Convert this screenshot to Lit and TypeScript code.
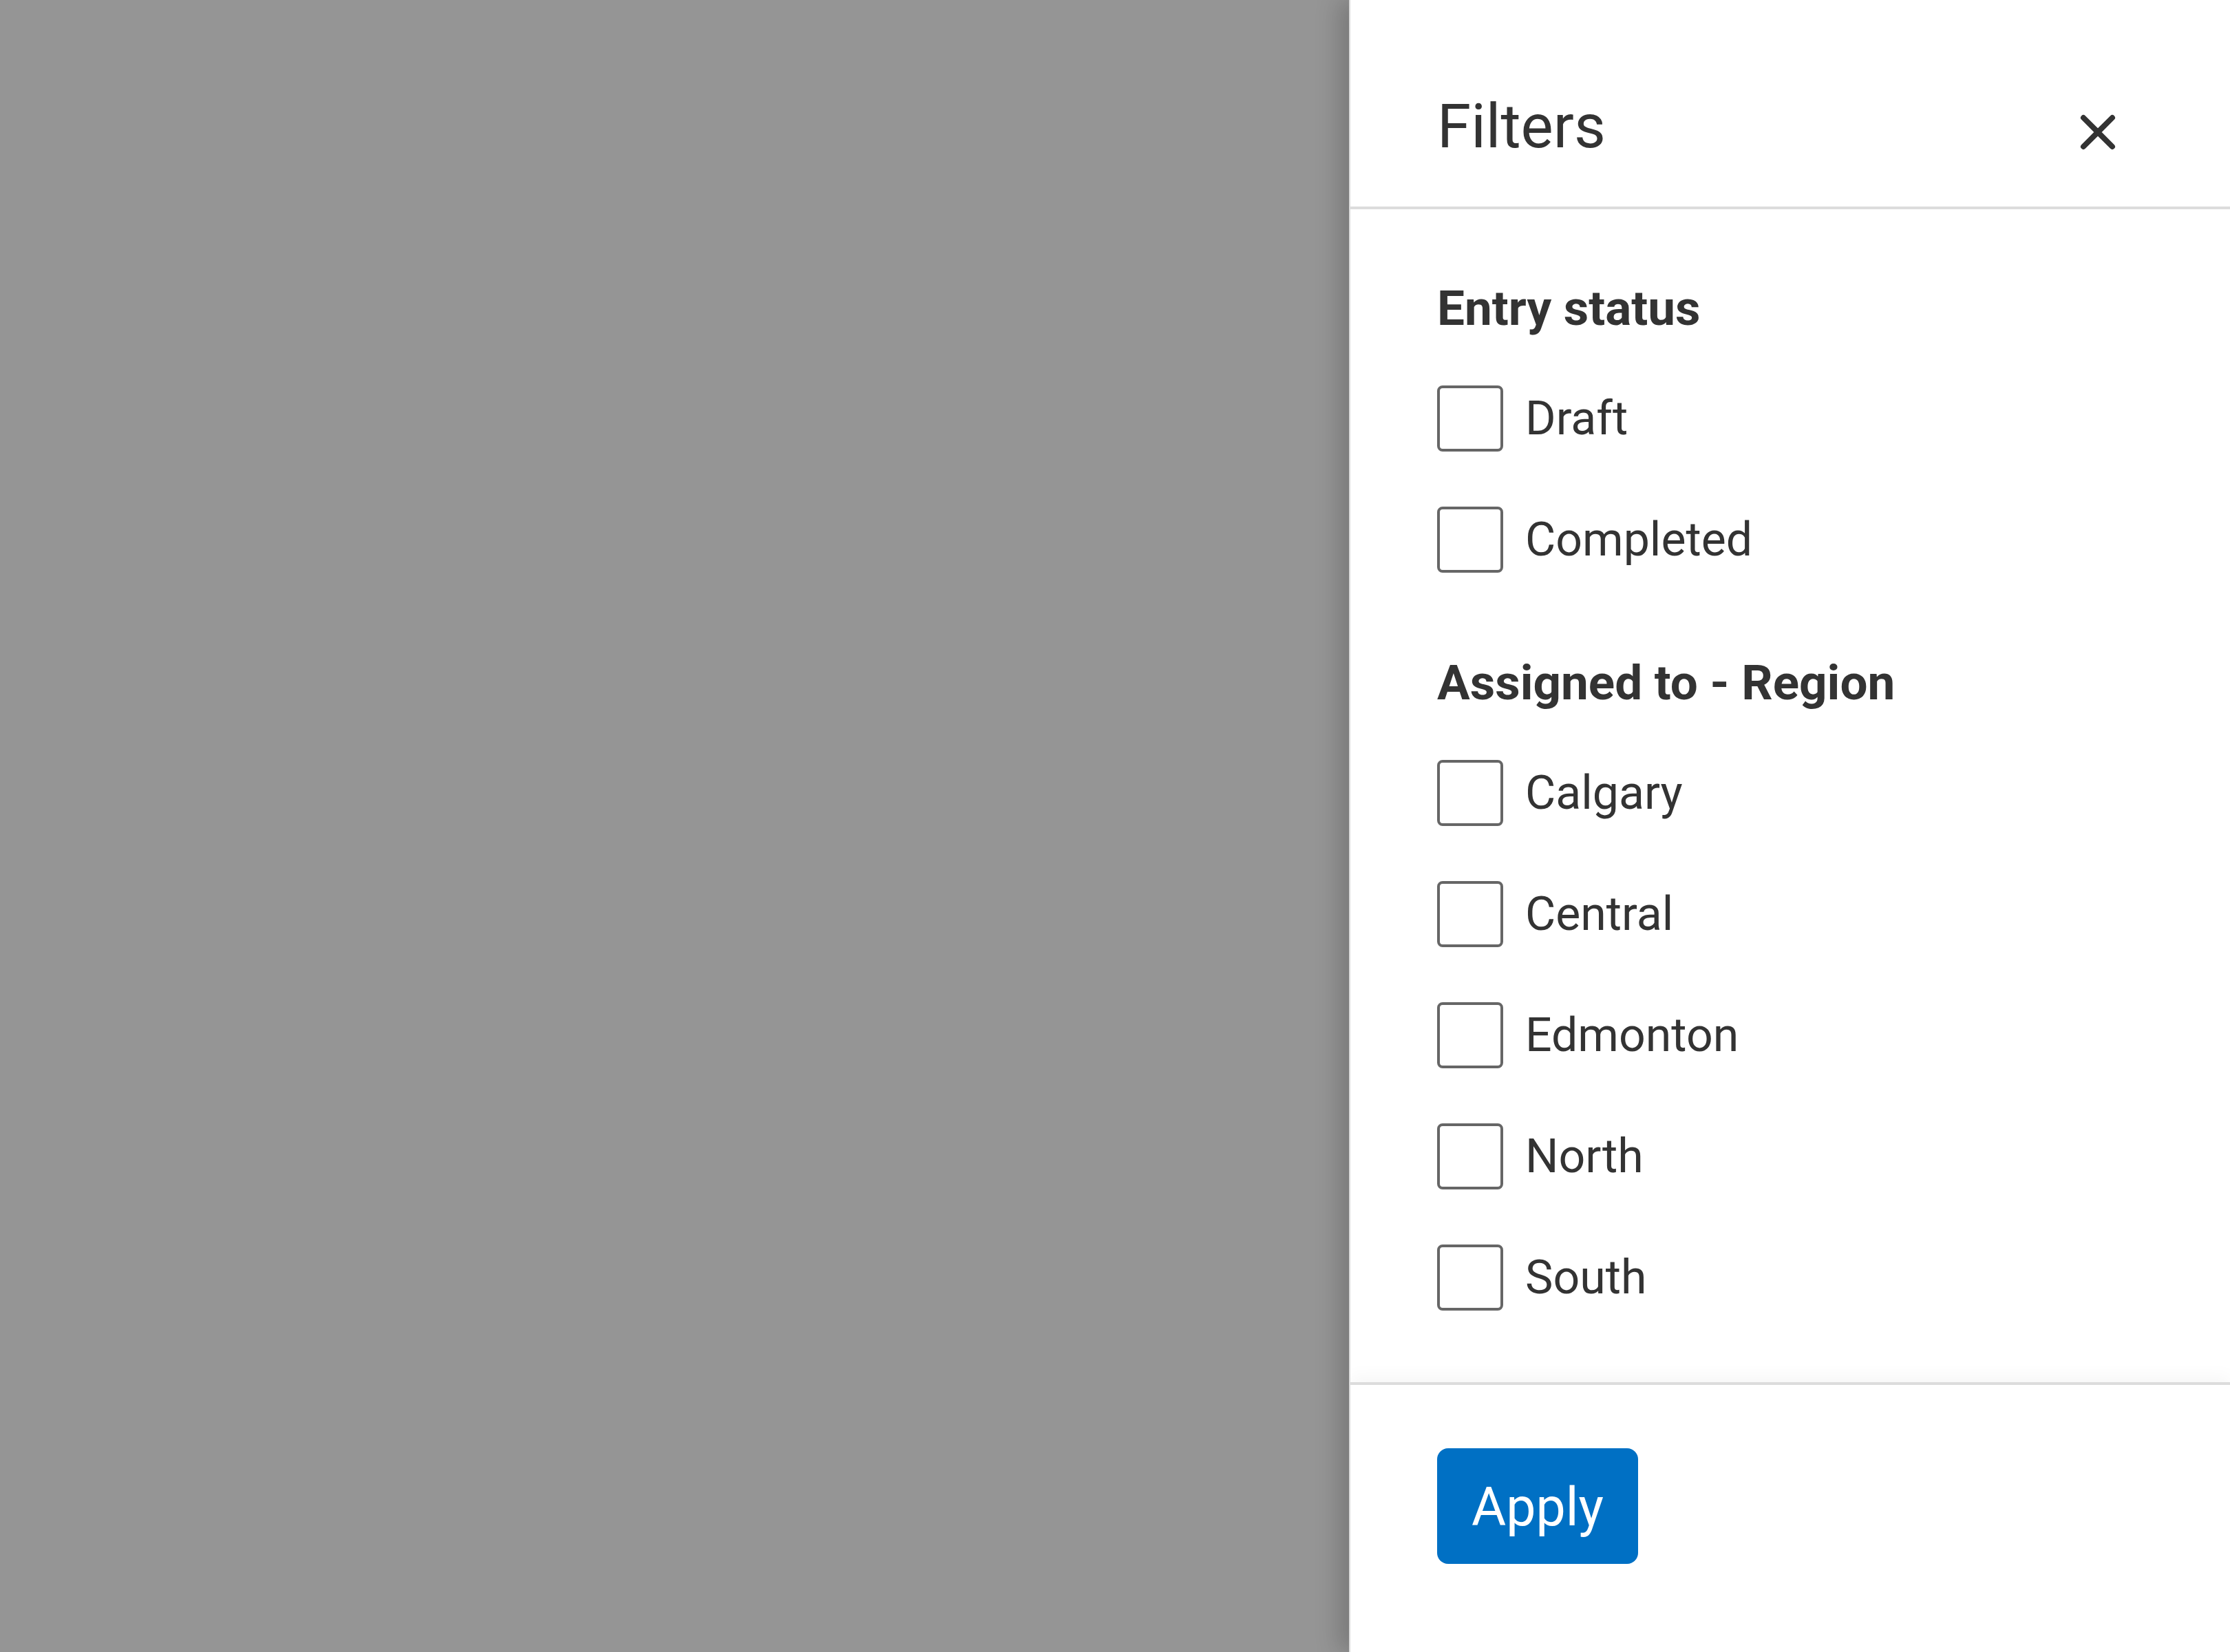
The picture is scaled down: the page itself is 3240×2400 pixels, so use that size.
import { LitElement, css, html } from 'lit';
import { customElement, property } from 'lit/decorators.js';

@customElement('filter-group')
export class FilterGroup extends LitElement {
  @property() heading = '';
  @property({ attribute: false }) options: string[] = [];

  static styles = css`
    :host {
      display: block;
    }
    .group {
      margin: 0;
      padding: 0;
      border: 0;
      min-width: 0;
    }
    .heading {
      padding: 0;
      margin-bottom: 64px;
      font-size: 71px;
      line-height: 96px;
      font-weight: 700;
    }
    .options {
      display: flex;
      flex-direction: column;
      align-items: flex-start;
      gap: 80px;
    }
    .option {
      display: flex;
      align-items: center;
      gap: 32px;
      font-size: 68px;
      line-height: 96px;
      cursor: pointer;
    }
    .box {
      appearance: none;
      box-sizing: border-box;
      flex: none;
      width: 96px;
      height: 96px;
      margin: 0;
      border: 4px solid #666;
      border-radius: 8px;
      background: #fff;
      cursor: pointer;
    }
    .box:checked {
      background: #0070c4;
      border-color: #0070c4;
    }
  `;

  render() {
    return html`
      <fieldset class="group">
        <legend class="heading">${this.heading}</legend>
        <div class="options">
          ${this.options.map(
            (name) => html`
              <label class="option">
                <input class="box" type="checkbox" name=${name} />
                <span>${name}</span>
              </label>
            `,
          )}
        </div>
      </fieldset>
    `;
  }
}

@customElement('app-root')
export class AppRoot extends LitElement {
  static styles = css`
    :host {
      display: flex;
      justify-content: flex-end;
      min-height: 100vh;
      overflow: hidden;
      background: #959595;
      color: #333;
      font-family: Roboto, 'Liberation Sans', sans-serif;
    }
    .drawer {
      box-sizing: border-box;
      display: flex;
      flex-direction: column;
      width: 1280px;
      max-width: 100%;
      border-left: 2px solid #dcdcdc;
      background: #fff;
      box-shadow: -16px 0 32px rgba(0, 0, 0, 0.18);
    }
    .header {
      display: flex;
      justify-content: space-between;
      align-items: flex-start;
      padding: 136px 136px 52px 126px;
      border-bottom: 4px solid #dcdcdc;
    }
    .title {
      margin: 0;
      font-size: 89px;
      line-height: 96px;
      font-weight: 400;
    }
    .close {
      display: flex;
      align-items: center;
      justify-content: center;
      width: 112px;
      height: 112px;
      padding: 0;
      border: 0;
      background: none;
      color: inherit;
      cursor: pointer;
    }
    .icon {
      width: 96px;
      height: 96px;
      fill: none;
      stroke: currentColor;
      stroke-width: 8;
      stroke-linecap: round;
    }
    .body {
      flex: 1;
      display: flex;
      flex-direction: column;
      gap: 112px;
      padding: 96px 126px 104px;
    }
    .footer {
      padding: 92px 126px 128px;
      border-top: 4px solid #dcdcdc;
      box-shadow: 0 -8px 24px rgba(0, 0, 0, 0.04);
      clip-path: inset(-48px 0 0 0);
    }
    .apply {
      height: 168px;
      padding: 4px 50px 0;
      border: 0;
      border-radius: 16px;
      background: #0070c4;
      color: #fff;
      font-family: inherit;
      font-size: 77px;
      line-height: 96px;
      cursor: pointer;
    }
  `;

  render() {
    return html`
      <aside class="drawer">
        <header class="header">
          <h1 class="title">Filters</h1>
          <button class="close" type="button" aria-label="Close">
            <svg class="icon" viewBox="0 0 96 96" aria-hidden="true">
              <path d="M27 27 69 69M69 27 27 69" />
            </svg>
          </button>
        </header>
        <div class="body">
          <filter-group heading="Entry status" .options=${['Draft', 'Completed']}></filter-group>
          <filter-group
            heading="Assigned to - Region"
            .options=${['Calgary', 'Central', 'Edmonton', 'North', 'South']}
          ></filter-group>
        </div>
        <footer class="footer">
          <button class="apply" type="button">Apply</button>
        </footer>
      </aside>
    `;
  }
}
